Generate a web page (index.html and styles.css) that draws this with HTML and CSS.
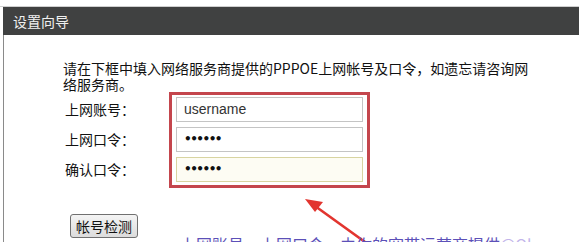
FILE: index.html
```html
<!DOCTYPE html>
<html lang="zh-CN">
<head>
<meta charset="utf-8">
<title>设置向导</title>
<link rel="stylesheet" href="styles.css">
</head>
<body>
<div class="frame">
  <div class="titlebar">设置向导</div>
  <div class="panel">
    <p class="intro">请在下框中填入网络服务商提供的PPPOE上网帐号及口令，如遗忘请咨询网络服务商。</p>
    <div class="form">
      <div class="labels">
        <div class="label">上网账号：</div>
        <div class="label">上网口令：</div>
        <div class="label">确认口令：</div>
      </div>
      <div class="redbox">
        <div class="field">username</div>
        <div class="field dots">••••••</div>
        <div class="field dots focus">••••••</div>
      </div>
    </div>
    <button class="check">帐号检测</button>
  </div>
  <svg class="arrow" width="80" height="60" viewBox="0 0 80 60">
    <line x1="70" y1="52" x2="20" y2="16" stroke="#e2352f" stroke-width="2.6" stroke-linecap="round"/>
    <polygon points="10,9 28,12 20,22" fill="#e2352f"/>
  </svg>
  <div class="note">上网账号、上网口令，由你的宽带运营商提供<span class="mark">@Qh.com</span></div>
</div>
</body>
</html>
```

FILE: styles.css
```css
html, body {
  margin: 0;
  padding: 0;
  background: #fff;
}
body {
  width: 579px;
  height: 242px;
  overflow: hidden;
  font-family: "Noto Sans CJK SC", "Liberation Sans", sans-serif;
  color: #111;
}
.frame {
  position: relative;
  margin-top: 6px;
  border-top: 1px solid #cfcfcf;
  height: 235px;
  overflow: hidden;
}
.titlebar {
  margin-left: 3px;
  height: 28px;
  background: #404141;
  color: #f0f0f0;
  font-size: 14px;
  line-height: 28px;
  padding-left: 10px;
}
.panel {
  margin-left: 3px;
  border-left: 1px solid #8a8a8a;
  padding-left: 59px;
  height: 207px;
}
.intro {
  margin: 0;
  padding-top: 25px;
  width: 476px;
  font-size: 14px;
  line-height: 16px;
}
.form {
  display: flex;
  align-items: flex-start;
}
.labels {
  display: flex;
  flex-direction: column;
  gap: 5px;
  padding-top: 5px;
  width: 104px;
  padding-left: 2px;
}
.label {
  height: 25px;
  line-height: 25px;
  font-size: 14px;
}
.redbox {
  border: 3px solid #c4464d;
  padding: 2px 4px 3px;
  display: flex;
  flex-direction: column;
  gap: 5px;
}
.field {
  box-sizing: border-box;
  width: 187px;
  height: 25px;
  border: 1px solid #c4c4c4;
  background: #fff;
  padding-left: 7px;
  font-family: "Liberation Sans", sans-serif;
  font-size: 14px;
  line-height: 23px;
  color: #333;
}
.dots {
  color: #111;
  font-family: "DejaVu Sans", sans-serif;
  font-size: 12px;
  letter-spacing: -1.5px;
  font-weight: bold;
}
.focus {
  border-color: #d8d4a0;
  background: #fdfcf3;
}
.check {
  margin: 26px 0 0 7px;
  width: 68px;
  height: 24px;
  padding: 0;
  border: 1px solid #707070;
  border-radius: 3px;
  background: linear-gradient(#f4f4f4, #dcdcdc);
  font-family: "Noto Sans CJK SC", sans-serif;
  font-size: 14px;
  color: #111;
}
.arrow {
  position: absolute;
  left: 295px;
  top: 183px;
}
.note {
  position: absolute;
  left: 180px;
  top: 227px;
  font-size: 16px;
  line-height: 20px;
  color: #5c50b8;
  white-space: nowrap;
}
.mark {
  color: #c2b4ea;
}
```
